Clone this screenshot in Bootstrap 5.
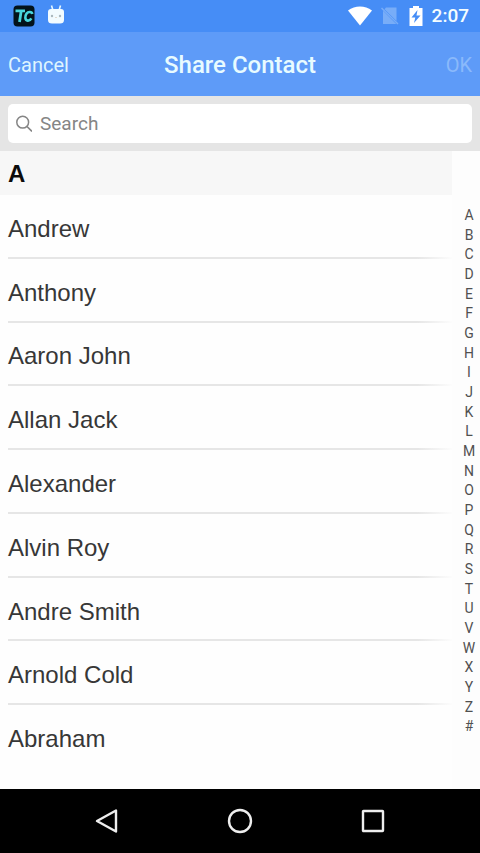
<!DOCTYPE html>
<html lang="en">
<head>
<meta charset="utf-8">
<meta name="viewport" content="width=device-width, initial-scale=1">
<title>Share Contact</title>
<link href="https://cdn.jsdelivr.net/npm/bootstrap@5.3.0/dist/css/bootstrap.min.css" rel="stylesheet">
<style>
body { font-family: Roboto, "Liberation Sans", sans-serif; background: #fdfdfd; }
svg { display: block; flex: none; }
.status-bar { background: #468df6; height: 32px; padding: 0 11px 0 12px; color: #f4fdff; }
.clock { font-size: 19px; line-height: 32px; font-weight: 500; }
.app-bar { background: #5e9bf8; height: 64px; padding: 2px 8px 0; }
.bar-btn, .bar-btn:hover { font-size: 20px; line-height: 32px; color: #dff5ff; }
.bar-btn:disabled { color: #8ab9fb; opacity: 1; border: 0; }
.bar-title { font-size: 24px; line-height: 32px; font-weight: 500; color: #e8fbff; }
.search-bar { background: #e5e5e5; padding: 8px; }
.search-field { background: #fff; height: 39px; border-radius: 5px; padding: 0 8px; }
.search-field input { font-size: 19px; line-height: 24px; color: #444; box-shadow: none; }
.search-field input:focus { box-shadow: none; }
.search-field input::placeholder { color: #858585; opacity: 1; }
.contacts { padding-bottom: 20px; font-family: "Liberation Sans", Arial, sans-serif; background: #fefefe; }
.section-head { background: #f7f7f7; font-size: 24px; line-height: 42px; font-weight: 700; color: #0c0c0c; padding: 2px 8px 0; }
.names { display: grid; grid-auto-rows: 1fr; padding-left: 8px; }
.names a { font-size: 24px; line-height: 32px; color: #373737; padding-top: 6px; border-bottom: 2px solid #e5e5e5; border-image: linear-gradient(90deg, #e6e6e6 92%, #fdfdfd) 1; }
.names li:last-child a { border-color: transparent; border-image: none; }
.letters { width: 28px; padding: 54px 0 53px 7px; font-size: 14px; line-height: 16px; }
.letters a { color: #505050; width: 20px; }
.nav-keys { background: #000; height: 64px; padding: 0 40px; }
</style>
</head>
<body>
<div class="d-flex flex-column min-vh-100">
  <div class="status-bar d-flex align-items-center justify-content-between">
    <div class="d-flex align-items-center gap-2">
      <svg width="24" height="24" viewBox="0 0 24 24" aria-hidden="true">
        <rect x="1.5" y="1.5" width="21" height="21" rx="4" fill="#03131b"/>
        <path d="M3.500 6.800h9.500M9.200 6.800 7.500 18" fill="none" stroke="#48d5dc" stroke-width="2.800"/>
        <path d="M20.300 10c-.5-2.400-4-2.700-5.700-.4-1.900 2.600-1.800 6.700 1 7 1.700.2 3-.8 3.700-2.200" fill="none" stroke="#48d5dc" stroke-width="2.600"/>
      </svg>
      <svg width="24" height="24" viewBox="0 0 24 24" aria-hidden="true">
        <path d="m7.500 1.500 1.500 5M16.500 1.500 15 6.500" stroke="#e6f7ff" stroke-width="1.600"/>
        <path d="M7 5h10q3 0 3 3v8q0 3.500-4 3.500H8q-4 0-4-3.500V8q0-3 3-3z" fill="#f2fbff"/>
        <circle cx="8" cy="12" r="1.200" fill="#a9b8bd"/><circle cx="16" cy="12" r="1.200" fill="#a9b8bd"/>
        <path d="m11.500 13 .5.600.5-.6" stroke="#d3b9a0" fill="none"/>
      </svg>
    </div>
    <div class="d-flex align-items-center gap-2">
      <svg width="24" height="20" viewBox="0 0 24 20" aria-hidden="true"><path d="M0 4.500C7-.8 17-.8 24 4.500L12 19.500z" fill="#fff"/></svg>
      <svg width="20" height="20" viewBox="0 0 20 20" aria-hidden="true"><path d="M6 1.500h10.500V15L4.500 3.200zM3 4.800 16.300 18H3z" fill="#78adf8"/><path d="m1.500 2 16.500 16" stroke="#78adf8" stroke-width="1.500"/></svg>
      <svg width="16" height="20" viewBox="0 0 16 20" aria-hidden="true"><path d="M5 0h6v2h3.500v18h-13V2H5z" fill="#fff"/><path d="M9.500 4 3.500 11.500h3.800L6 17l6.500-7.500H8.500z" fill="#468df6"/></svg>
      <span class="clock">2:07</span>
    </div>
  </div>

  <header class="app-bar row g-0 align-items-center">
    <div class="col"><button type="button" class="btn bar-btn p-0 border-0">Cancel</button></div>
    <h1 class="bar-title col-auto m-0">Share Contact</h1>
    <div class="col text-end"><button type="button" class="btn bar-btn p-0" disabled>OK</button></div>
  </header>

  <form class="search-bar" role="search">
    <div class="search-field d-flex align-items-center gap-2">
      <label for="contact-search">
        <svg width="16" height="18" viewBox="0 0 16 18" role="img" aria-label="Search contacts"><circle cx="6.700" cy="7.200" r="5.900" fill="none" stroke="#858585" stroke-width="1.500"/><path d="m11 11.500 5 5" stroke="#858585" stroke-width="1.700"/></svg>
      </label>
      <input id="contact-search" type="search" class="form-control border-0 p-0 bg-transparent" placeholder="Search">
    </div>
  </form>

  <main class="d-flex flex-fill">
    <section class="contacts d-flex flex-column flex-fill">
      <h2 class="section-head m-0" id="A">A</h2>
      <ul class="names list-unstyled m-0 flex-fill">
        <li class="d-flex"><a href="#" class="d-flex align-items-center w-100 text-decoration-none">Andrew</a></li>
        <li class="d-flex"><a href="#" class="d-flex align-items-center w-100 text-decoration-none">Anthony</a></li>
        <li class="d-flex"><a href="#" class="d-flex align-items-center w-100 text-decoration-none">Aaron John</a></li>
        <li class="d-flex"><a href="#" class="d-flex align-items-center w-100 text-decoration-none">Allan Jack</a></li>
        <li class="d-flex"><a href="#" class="d-flex align-items-center w-100 text-decoration-none">Alexander</a></li>
        <li class="d-flex"><a href="#" class="d-flex align-items-center w-100 text-decoration-none">Alvin Roy</a></li>
        <li class="d-flex"><a href="#" class="d-flex align-items-center w-100 text-decoration-none">Andre Smith</a></li>
        <li class="d-flex"><a href="#" class="d-flex align-items-center w-100 text-decoration-none">Arnold Cold</a></li>
        <li class="d-flex"><a href="#" class="d-flex align-items-center w-100 text-decoration-none">Abraham</a></li>
      </ul>
    </section>
    <nav class="letters d-flex flex-column" aria-label="Alphabet index"></nav>
  </main>

  <div class="nav-keys d-flex align-items-center justify-content-around">
    <button type="button" class="btn p-0 border-0" aria-label="Back"><svg width="28" height="28" viewBox="0 0 28 28"><path d="M23 3.500v21L4 14z" fill="none" stroke="#eee" stroke-width="2.400" stroke-linejoin="round"/></svg></button>
    <button type="button" class="btn p-0 border-0" aria-label="Home"><svg width="28" height="28" viewBox="0 0 28 28"><circle cx="14" cy="14" r="11" fill="none" stroke="#eee" stroke-width="2.400"/></svg></button>
    <button type="button" class="btn p-0 border-0" aria-label="Recent apps"><svg width="28" height="28" viewBox="0 0 28 28"><rect x="4" y="4" width="20" height="20" rx=".5" fill="none" stroke="#eee" stroke-width="2.400"/></svg></button>
  </div>
</div>
<script src="https://cdn.jsdelivr.net/npm/bootstrap@5.3.0/dist/js/bootstrap.bundle.min.js"></script>
<script>
const letters = document.querySelector('.letters');
for (const ch of 'ABCDEFGHIJKLMNOPQRSTUVWXYZ#') {
  const a = document.createElement('a');
  a.href = '#' + (ch === '#' ? '' : ch);
  a.textContent = ch;
  a.className = 'd-flex flex-fill align-items-center justify-content-center text-decoration-none';
  letters.append(a);
}
</script>
</body>
</html>
